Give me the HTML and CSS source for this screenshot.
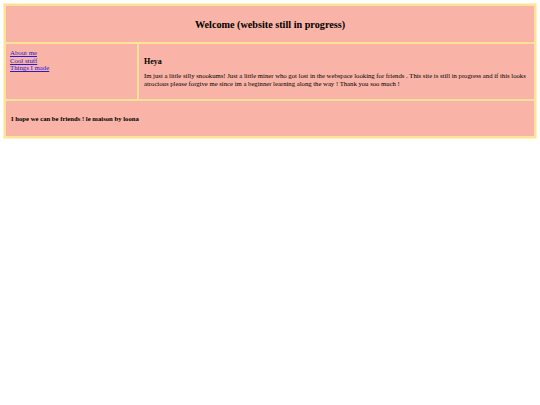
FILE: index.html
```html
<!DOCTYPE html>
<html>
<head>
<meta charset="utf-8">
<link rel="stylesheet" href="styles.css">
</head>
<body>
<div class="page">
  <header class="box header"><h1 class="title">Welcome (website still in progress)</h1></header>
  <nav class="box nav">
    <a href="#">About me</a>
    <a href="#">Cool stuff</a>
    <a href="#">Things I made</a>
  </nav>
  <main class="box main">
    <h2 class="heya">Heya</h2>
    <p class="text">Im just a little silly snookums! Just a little miner who got lost in the webspace looking for friends . This site is still in progress and if this looks atrocious please forgive me since im a beginner learning along the way ! Thank you soo much !</p>
  </main>
  <footer class="box footer"><p class="foot">I hope we can be friends ! le maison by loona</p></footer>
</div>
</body>
</html>
```
FILE: styles.css
```css
html, body { margin: 0; padding: 0; background: #fff; }
body { font-family: "Liberation Serif", "DejaVu Serif", serif; color: #000; }
.page {
  margin: 4px;
  display: grid;
  grid-template-columns: 131px 395px;
  grid-template-rows: 36px 55px 35px;
  gap: 2px;
  padding: 2px;
  background: #fde29a;
  box-shadow: 0 0 0 1px #fff1c4;
  width: 528px;
}
.box { background: #f9b4a7; }
.header { grid-column: 1 / 3; display: flex; align-items: center; justify-content: center; }
.title { margin: 0; font-family: "Liberation Serif", serif; font-size: 10.2px; font-weight: bold; }
.nav { display: flex; flex-direction: column; padding: 5px 4px; font-family: "Liberation Serif", serif; font-size: 6.8px; line-height: 7.5px; }
.nav a { color: #2a1bd0; }
.main { padding: 9px 1px 8px 5px; }
.heya { margin: 4px 0 6px; font-family: "Liberation Serif", serif; font-size: 8px; font-weight: bold; }
.text { margin: 0; font-family: "Liberation Serif", serif; font-size: 6.7px; line-height: 7.5px; }
.footer { grid-column: 1 / 3; display: flex; align-items: center; padding: 0 5px; }
.foot { margin: 0; font-family: "Liberation Serif", serif; font-size: 6.7px; font-weight: bold; }
```
